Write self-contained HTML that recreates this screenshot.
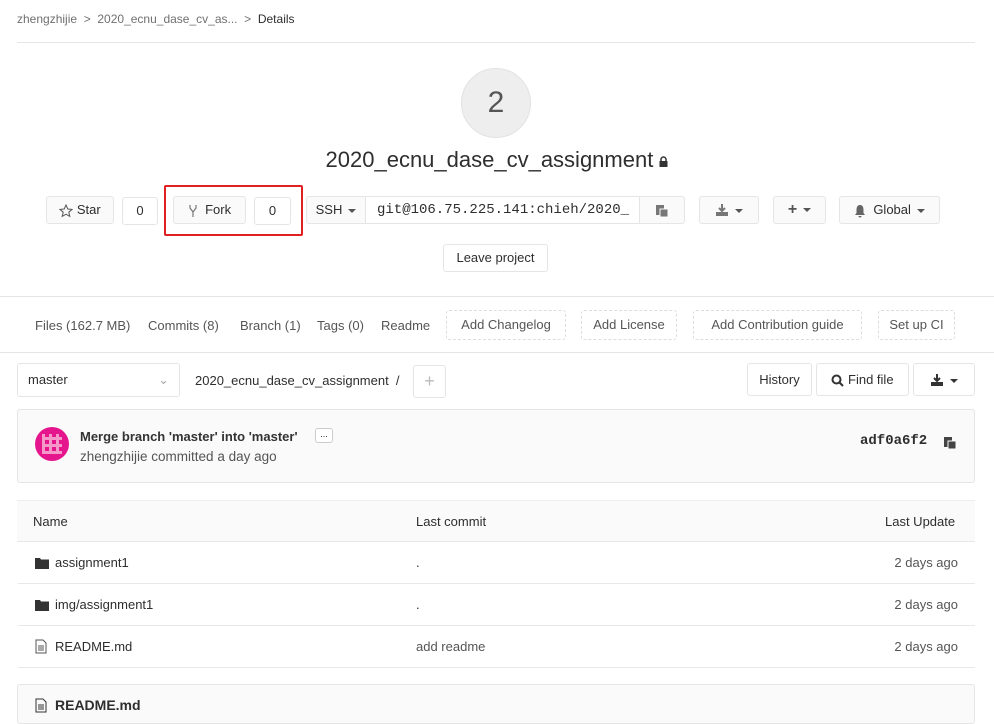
<!DOCTYPE html>
<html><head><meta charset="utf-8"><style>
*{box-sizing:border-box;margin:0;padding:0}
body{width:994px;height:717px;overflow:hidden;background:#fff;font-family:"Liberation Sans",sans-serif;color:#2e2e2e;font-size:13px;position:relative}
.a{position:absolute}
.btn{position:absolute;border:1px solid #e5e5e5;background:#fafafa;border-radius:3px;height:28px;line-height:26px;font-size:13px;color:#2e2e2e;text-align:center}
.dash{position:absolute;border:1px dashed #ddd;border-radius:3px;height:30px;line-height:28px;font-size:13px;color:#555;text-align:center;top:310px}
.caret{display:inline-block;width:0;height:0;border-left:4px solid transparent;border-right:4px solid transparent;border-top:4px solid #555;vertical-align:middle;margin-left:6px}
.hr{position:absolute;height:1px;background:#e5e5e5}
.row{position:absolute;left:18px;width:957px;height:42px;border-bottom:1px solid #e8e8e8;line-height:42px;font-size:13px}
svg{vertical-align:middle}
</style></head><body>
<div class="a" style="left:17px;top:12px;font-size:12px;color:#707070">zhengzhijie &nbsp;&gt;&nbsp; 2020_ecnu_dase_cv_as... &nbsp;&gt;&nbsp; <span style="color:#2e2e2e">Details</span></div>
<div class="hr" style="left:17px;top:42px;width:958px"></div>
<div class="a" style="left:461px;top:68px;width:70px;height:70px;border-radius:50%;background:#eee;border:1px solid #e2e2e2;text-align:center;line-height:68px;font-size:30px;color:#555">2</div>
<div class="a" style="left:0;width:994px;top:147px;text-align:center;font-size:22px;color:#2e2e2e">2020_ecnu_dase_cv_assignment <svg width="9" height="11" viewBox="0 0 9 11"><path d="M2 5V3.5a2.5 2.5 0 015 0V5" stroke="#333" stroke-width="1.5" fill="none"/><rect x="0.5" y="5" width="8" height="6" fill="#333"/></svg></div>

<div class="btn" style="left:46px;top:196px;width:68px"><svg width="14" height="14" viewBox="0 0 14 14"><path d="M7 1l1.8 4 4.2.4-3.2 2.8 1 4.2L7 10.2 3.2 12.4l1-4.2L1 5.4l4.2-.4z" fill="none" stroke="#555" stroke-width="1"/></svg> Star</div>
<div class="btn" style="left:122px;top:197px;width:36px;background:#fff">0</div>
<div class="a" style="left:164px;top:185px;width:139px;height:51px;border:2px solid #e02020;border-radius:2px"></div>
<div class="btn" style="left:173px;top:196px;width:73px"><svg width="10" height="14" viewBox="0 0 10 14"><path d="M2 1v3l3 4v5M8 1v3L5 8" fill="none" stroke="#777" stroke-width="1.2"/></svg>&nbsp; Fork</div>
<div class="btn" style="left:254px;top:197px;width:37px;background:#fff">0</div>
<div class="btn" style="left:306px;top:196px;width:60px;border-radius:3px 0 0 3px">SSH<span class="caret"></span></div>
<div class="btn" style="left:365px;top:196px;width:275px;background:#fff;border-radius:0;text-align:left;padding-left:11px;font-family:'Liberation Mono',monospace;font-size:14px;overflow:hidden;white-space:nowrap">git@106.75.225.141:chieh/2020_</div>
<div class="btn" style="left:639px;top:196px;width:46px;border-radius:0 3px 3px 0"><svg width="14" height="14" viewBox="0 0 14 14"><rect x="1" y="1" width="8" height="10" fill="#777"/><rect x="5" y="5" width="8" height="8" fill="#777" stroke="#fafafa" stroke-width="1"/></svg></div>
<div class="btn" style="left:699px;top:196px;width:60px"><svg width="14" height="13" viewBox="0 0 14 13"><path d="M7 0v7M4 4l3 3 3-3" stroke="#777" stroke-width="2" fill="none"/><path d="M1 8v4h12V8" fill="#777"/></svg><span class="caret"></span></div>
<div class="btn" style="left:773px;top:196px;width:53px;color:#555;font-weight:bold;font-size:16px">+<span class="caret"></span></div>
<div class="btn" style="left:839px;top:196px;width:101px"><svg width="12" height="14" viewBox="0 0 12 14"><path d="M6 1C3 1 2.5 4 2.5 6v3L1 11h10L9.5 9V6C9.5 4 9 1 6 1z M4.5 12a1.5 1.5 0 003 0" fill="#666"/></svg>&nbsp; Global<span class="caret"></span></div>
<div class="btn" style="left:443px;top:244px;width:105px;background:#fff">Leave project</div>

<div class="hr" style="left:0;top:296px;width:994px"></div>
<div class="a" style="left:35px;top:318px;color:#555">Files (162.7 MB)</div>
<div class="a" style="left:148px;top:318px;color:#555">Commits (8)</div>
<div class="a" style="left:240px;top:318px;color:#555">Branch (1)</div>
<div class="a" style="left:317px;top:318px;color:#555">Tags (0)</div>
<div class="a" style="left:381px;top:318px;color:#555">Readme</div>
<div class="dash" style="left:446px;width:120px">Add Changelog</div>
<div class="dash" style="left:581px;width:96px">Add License</div>
<div class="dash" style="left:693px;width:169px">Add Contribution guide</div>
<div class="dash" style="left:878px;width:77px">Set up CI</div>
<div class="hr" style="left:0;top:352px;width:994px"></div>

<div class="btn" style="left:17px;top:363px;width:163px;height:34px;line-height:32px;background:#fff;text-align:left;padding-left:10px">master<span class="a" style="right:10px;color:#aaa">⌄</span></div>
<div class="a" style="left:195px;top:373px">2020_ecnu_dase_cv_assignment &nbsp;/</div>
<div class="btn" style="left:413px;top:365px;width:33px;height:33px;line-height:31px;background:#fff;color:#bbb;font-size:18px">+</div>
<div class="btn" style="left:747px;top:363px;width:65px;height:33px;line-height:31px;background:#fff">History</div>
<div class="btn" style="left:816px;top:363px;width:93px;height:33px;line-height:31px;background:#fff"><svg width="13" height="13" viewBox="0 0 13 13"><circle cx="5.5" cy="5.5" r="4" fill="none" stroke="#333" stroke-width="2"/><path d="M8 8l4 4" stroke="#333" stroke-width="2"/></svg> Find file</div>
<div class="btn" style="left:913px;top:363px;width:62px;height:33px;line-height:31px;background:#fff"><svg width="14" height="13" viewBox="0 0 14 13"><path d="M7 0v7M4 4l3 3 3-3" stroke="#333" stroke-width="2" fill="none"/><path d="M1 8v4h12V8" fill="#333"/></svg><span class="caret" style="border-top-color:#333"></span></div>

<div class="a" style="left:17px;top:409px;width:958px;height:74px;background:#fafafa;border:1px solid #e5e5e5;border-radius:3px"></div>
<div class="a" style="left:35px;top:427px;width:34px;height:34px;border-radius:50%;background:#e5168d"></div>
<div class="a" style="left:42px;top:434px;width:20px;height:20px;background:repeating-linear-gradient(90deg,#f7a6d0 0 3px,transparent 3px 7px),repeating-linear-gradient(0deg,#f7a6d0 0 3px,transparent 3px 7px);opacity:.9"></div>
<div class="a" style="left:80px;top:429px;font-size:13px;font-weight:bold;color:#333">Merge branch 'master' into 'master'</div>
<div class="a" style="left:315px;top:428px;width:18px;height:15px;border:1px solid #ccc;border-radius:3px;background:#fff;font-size:9px;text-align:center;line-height:10px">...</div>
<div class="a" style="left:80px;top:449px;font-size:13.5px;color:#555">zhengzhijie committed a day ago</div>
<div class="a" style="left:860px;top:433px;font-family:'Liberation Mono',monospace;font-weight:bold;font-size:14px">adf0a6f2</div>
<div class="a" style="left:943px;top:434px"><svg width="14" height="14" viewBox="0 0 14 14"><rect x="1" y="1" width="8" height="10" fill="#444"/><rect x="5" y="5" width="8" height="8" fill="#444" stroke="#fafafa" stroke-width="1"/></svg></div>

<div class="a" style="left:17px;top:500px;width:958px;height:42px;background:#fafafa;border-top:1px solid #eee;border-bottom:1px solid #e8e8e8"></div>
<div class="a" style="left:33px;top:514px">Name</div>
<div class="a" style="left:416px;top:514px">Last commit</div>
<div class="a" style="left:885px;top:514px">Last Update</div>
<svg class="a" style="left:35px;top:557px" width="14" height="12" viewBox="0 0 14 12"><path d="M0 1h5l1 1.5h8V12H0z" fill="#333"/></svg>
<svg class="a" style="left:35px;top:599px" width="14" height="12" viewBox="0 0 14 12"><path d="M0 1h5l1 1.5h8V12H0z" fill="#333"/></svg>
<svg class="a" style="left:35px;top:639px" width="12" height="15" viewBox="0 0 12 15"><path d="M1 1h7l3 3v10H1z" fill="none" stroke="#555"/><path d="M3 7h6M3 9h6M3 11h6" stroke="#555"/></svg>
<div class="row" style="top:542px"><span style="margin-left:37px">assignment1</span><span class="a" style="left:398px">.</span><span class="a" style="right:17px;color:#555">2 days ago</span></div>
<div class="row" style="top:584px"><span style="margin-left:37px">img/assignment1</span><span class="a" style="left:398px">.</span><span class="a" style="right:17px;color:#555">2 days ago</span></div>
<div class="row" style="top:626px"><span style="margin-left:37px">README.md</span><span class="a" style="left:398px;color:#555">add readme</span><span class="a" style="right:17px;color:#555">2 days ago</span></div>

<div class="a" style="left:17px;top:684px;width:958px;height:40px;background:#fafafa;border:1px solid #e5e5e5;border-radius:3px"></div>
<svg class="a" style="left:35px;top:698px" width="12" height="15" viewBox="0 0 12 15"><path d="M1 1h7l3 3v10H1z" fill="none" stroke="#333"/><path d="M3 7h6M3 9h6M3 11h6" stroke="#333"/></svg>
<div class="a" style="left:55px;top:697px;font-weight:bold;font-size:14px">README.md</div>
</body></html>
